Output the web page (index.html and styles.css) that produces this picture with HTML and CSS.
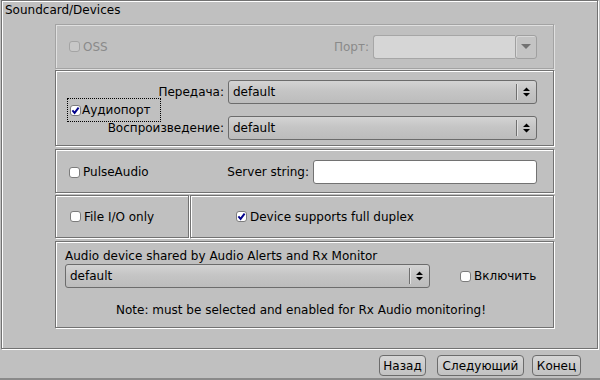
FILE: index.html
```html
<!DOCTYPE html>
<html>
<head>
<meta charset="utf-8">
<link rel="stylesheet" href="styles.css">
</head>
<body>
<div class="window">
  <div class="main">
    <div class="title">Soundcard/Devices</div>
    <div class="groups">
      <div class="group oss">
        <div class="check dis"><span class="box"></span><span>OSS</span></div>
        <span class="spacer"></span>
        <span class="lbl">Порт:</span>
        <div class="port">
          <span class="pval"></span>
          <span class="pbtn"><svg width="10" height="5" viewBox="0 0 10 5"><path d="M0 0H10L5 5Z" fill="#727272"/></svg></span>
        </div>
      </div>
      <div class="group audio">
        <div class="check focus"><span class="box"><svg width="9" height="9" viewBox="0 0 9 9"><path d="M1.4 4.3L3.6 6.9L7.6 1.6" fill="none" stroke="#00008b" stroke-width="1.9"/></svg></span><span>Аудиопорт</span></div>
        <span class="lbl r1">Передача:</span>
        <div class="choice c1"><span class="val">default</span><span class="arrows"><span class="sep"></span><svg width="7" height="10" viewBox="0 0 7 10"><path d="M0 4L3.5 0.5L7 4Z M0 6H7L3.5 9.5Z" fill="#000"/></svg></span></div>
        <span class="lbl r2">Воспроизведение:</span>
        <div class="choice c2"><span class="val">default</span><span class="arrows"><span class="sep"></span><svg width="7" height="10" viewBox="0 0 7 10"><path d="M0 4L3.5 0.5L7 4Z M0 6H7L3.5 9.5Z" fill="#000"/></svg></span></div>
      </div>
      <div class="group pulse">
        <div class="check"><span class="box"></span><span>PulseAudio</span></div>
        <span class="spacer"></span>
        <span class="lbl">Server string:</span>
        <span class="input"></span>
      </div>
      <div class="row">
        <div class="group file">
          <div class="check"><span class="box"></span><span>File I/O only</span></div>
        </div>
        <div class="group duplex">
          <div class="check"><span class="box"><svg width="9" height="9" viewBox="0 0 9 9"><path d="M1.4 4.3L3.6 6.9L7.6 1.6" fill="none" stroke="#00008b" stroke-width="1.9"/></svg></span><span>Device supports full duplex</span></div>
        </div>
      </div>
      <div class="group device">
        <div class="devlabel">Audio device shared by Audio Alerts and Rx Monitor</div>
        <div class="devrow">
          <div class="choice devchoice"><span class="val">default</span><span class="arrows"><span class="sep"></span><svg width="7" height="10" viewBox="0 0 7 10"><path d="M0 4L3.5 0.5L7 4Z M0 6H7L3.5 9.5Z" fill="#000"/></svg></span></div>
          <div class="check enable"><span class="box"></span><span>Включить</span></div>
        </div>
        <div class="note">Note: must be selected and enabled for Rx Audio monitoring!</div>
      </div>
    </div>
  </div>
  <div class="footer">
    <button class="btn back">Назад</button>
    <button class="btn next">Следующий</button>
    <button class="btn finish">Конец</button>
  </div>
</div>
</body>
</html>
```
FILE: styles.css
```css
* { box-sizing: border-box; }
html, body { margin: 0; padding: 0; }
body {
  width: 600px;
  height: 380px;
  background: #c0c0c0;
  font: 12px/14px "DejaVu Sans", sans-serif;
  color: #000;
  overflow: hidden;
}
.window { display: flex; flex-direction: column; height: 380px; }
.main {
  margin-left: 1px;
  width: 597px;
  height: 349px;
  border: 1px solid #727272;
  box-shadow: inset 1px 1px 0 #fff, 1px 1px 0 #fff;
}
.title { margin-top: 2px; padding-left: 3px; }
.groups {
  display: flex;
  flex-direction: column;
  margin-left: 53px;
  width: 499px;
}
.group {
  border: 1px solid #727272;
  box-shadow: inset 1px 1px 0 #fff, 1px 1px 0 #fff;
}
.spacer { flex: 1; }

.oss {
  height: 45px;
  margin-top: 7px;
  display: flex;
  align-items: center;
  padding: 0 16px 0 13px;
  border-color: #a3a3a3;
  box-shadow: inset 1px 1px 0 #e0e0e0, 1px 1px 0 #e0e0e0;
  color: #8a8a8a;
}
.oss .lbl { margin-right: 4px; }
.port { display: flex; width: 164px; height: 24px; }
.pval {
  flex: 1;
  background: #d6d6d6;
  border: 1px solid #a6a6a6;
  border-right: none;
  border-radius: 3px 0 0 3px;
}
.pbtn {
  width: 22px;
  height: 24px;
  border: 1px solid #a0a0a0;
  border-radius: 3px;
  background: #c4c4c4;
  box-shadow: inset 1px 1px 0 #d8d8d8;
  display: flex;
  align-items: center;
  justify-content: center;
}

.audio {
  height: 76px;
  margin-top: 1px;
  display: grid;
  grid-template-columns: 157px 309px;
  grid-template-rows: 24px 24px;
  column-gap: 4px;
  row-gap: 12px;
  padding: 9px 16px 0 11px;
}
.audio .lbl { justify-self: end; align-self: center; }
.audio .r1 { grid-column: 1; grid-row: 1; }
.audio .r2 { grid-column: 1; grid-row: 2; }
.audio .c1 { grid-column: 2; grid-row: 1; }
.audio .c2 { grid-column: 2; grid-row: 2; }
.focus {
  grid-column: 1;
  grid-row: 1 / 3;
  justify-self: start;
  align-self: center;
  height: 24px;
  border: 1px dotted #000;
  padding: 0 9px 0 2px;
}

.check { display: flex; align-items: center; }
.box {
  width: 11px;
  height: 11px;
  flex: none;
  border: 1px solid #7c7c7c;
  border-radius: 3px;
  background: #fff;
  margin-right: 3px;
  display: flex;
  align-items: center;
  justify-content: center;
}
.focus .box { margin-right: 1px; }
.dis .box { border-color: #a4a4a4; background: #c8c8c8; }

.choice {
  display: flex;
  align-items: center;
  height: 24px;
  border: 1px solid #6c6c6c;
  border-radius: 3px;
  background: linear-gradient(#d4d4d4, #c5c5c5 45%, #bcbcbc);
}
.choice .val { flex: 1; padding-left: 4px; }
.arrows { width: 20px; height: 100%; display: flex; align-items: center; }
.sep { width: 1px; height: 16px; background: #6f6f6f; box-shadow: 1px 0 0 #e2e2e2; }
.arrows svg { margin-left: 6px; }

.pulse {
  height: 44px;
  margin-top: 3px;
  display: flex;
  align-items: center;
  padding: 2px 16px 0 13px;
}
.pulse .lbl { margin-right: 4px; }
.input {
  width: 224px;
  height: 24px;
  border: 1px solid #727272;
  border-radius: 3px;
  background: #fff;
}

.row { display: flex; margin-top: 2px; height: 43px; }
.file { width: 134px; display: flex; align-items: center; padding-left: 14px; }
.duplex { width: 364px; margin-left: 1px; display: flex; align-items: center; padding-left: 45px; }

.device { height: 87px; margin-top: 3px; padding: 7px 16px 0 9px; }
.devrow { display: flex; align-items: center; margin-top: 1px; }
.devchoice { width: 365px; }
.enable { margin-left: 30px; }
.note { text-align: center; margin-top: 15px; }

.footer {
  height: 31px;
  display: flex;
  justify-content: flex-end;
  align-items: flex-start;
  gap: 8px;
  padding: 6px 19px 0 0;
  border-bottom: 2px solid #8a8a8a;
}
.btn {
  height: 21px;
  padding: 0;
  margin: 0;
  border: 1px solid #6c6c6c;
  border-radius: 4px;
  background: linear-gradient(#d6d6d6, #c2c2c2);
  font: 12px/14px "DejaVu Sans", sans-serif;
  color: #000;
  text-align: center;
}
.back { width: 47px; margin-right: 3px; }
.next { width: 87px; }
.finish { width: 49px; }
```
